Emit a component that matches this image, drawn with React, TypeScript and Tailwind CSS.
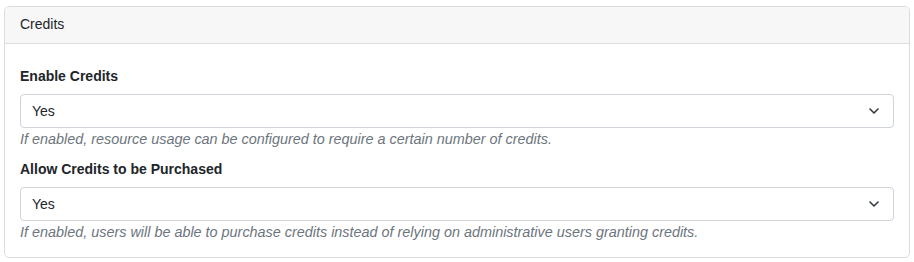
import React from "react";

function Chevron() {
  return (
    <svg width="10" height="6" viewBox="0 0 10 6" className="shrink-0">
      <path d="M1 1 5 5 9 1" fill="none" stroke="#343a40" strokeWidth="1.6" strokeLinecap="round" strokeLinejoin="round" />
    </svg>
  );
}

function SelectBox({ value }: { value: string }) {
  return (
    <div className="flex h-[34px] items-center justify-between rounded-[4px] border border-[#ced4da] bg-white pl-[11px] pr-[14px] text-[14px] text-[#212529]">
      <span>{value}</span>
      <Chevron />
    </div>
  );
}

function Field({ label, value, help, first }: { label: string; value: string; help: string; first?: boolean }) {
  return (
    <div className={first ? "" : "mt-[9px]"}>
      <div className="mb-[7px] text-[14px] font-bold leading-[21px] text-[#212529]">{label}</div>
      <SelectBox value={value} />
      <div className="mt-[1px] text-[14.4px] italic leading-[21px] text-[#6c757d]">{help}</div>
    </div>
  );
}

export default function App() {
  return (
    <div className="bg-white px-[4px] pt-[6px] pb-[4px]" style={{ fontFamily: '"Liberation Sans", Arial, sans-serif' }}>
      <div className="overflow-hidden rounded-[5px] border border-[#dcdcdc] bg-white">
        <div className="flex h-[37px] items-center border-b border-[#dcdcdc] bg-[#f7f7f7] px-[15px] pb-[2px] text-[14px] text-[#212529]">
          Credits
        </div>
        <div className="px-[15px] pt-[22px] pb-[14px]">
          <Field
            first
            label="Enable Credits"
            value="Yes"
            help="If enabled, resource usage can be configured to require a certain number of credits."
          />
          <Field
            label="Allow Credits to be Purchased"
            value="Yes"
            help="If enabled, users will be able to purchase credits instead of relying on administrative users granting credits."
          />
        </div>
      </div>
    </div>
  );
}
